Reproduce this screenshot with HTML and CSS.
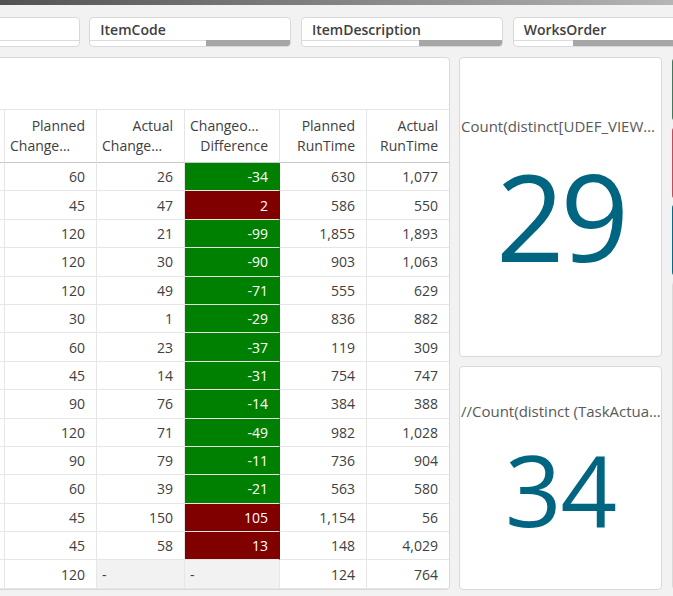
FILE: index.html
```html
<!DOCTYPE html>
<html lang="en">
<head>
<meta charset="utf-8">
<title>Changeover dashboard</title>
<link rel="stylesheet" href="styles.css">
</head>
<body>
<div class="topbar"></div>

<div class="filters">
  <div class="filter">
    <div class="fname"></div>
    <div class="fbar"><span class="poss" style="width:100%"></span></div>
  </div>
  <div class="filter">
    <div class="fname">ItemCode</div>
    <div class="fbar"><span class="poss" style="width:58%"></span><span class="excl"></span></div>
  </div>
  <div class="filter">
    <div class="fname">ItemDescription</div>
    <div class="fbar"><span class="poss" style="width:58.5%"></span><span class="excl"></span></div>
  </div>
  <div class="filter">
    <div class="fname">WorksOrder</div>
    <div class="fbar"><span class="poss" style="width:29.5%"></span><span class="excl"></span></div>
  </div>
</div>

<div class="main">
  <section class="card table-card">
    <table class="grid">
      <colgroup>
        <col class="w1"><col class="w2"><col class="w3"><col class="w4"><col class="w5"><col class="w6">
      </colgroup>
      <thead>
        <tr>
          <th></th>
          <th><span>Planned</span><span class="cut">Change…</span></th>
          <th><span>Actual</span><span class="cut">Change…</span></th>
          <th><span class="cut">Changeo…</span><span>Difference</span></th>
          <th><span>Planned</span><span>RunTime</span></th>
          <th><span>Actual</span><span>RunTime</span></th>
        </tr>
      </thead>
      <tbody>
        <tr><td></td><td>60</td><td>26</td><td class="neg">-34</td><td>630</td><td>1,077</td></tr>
        <tr><td></td><td>45</td><td>47</td><td class="pos">2</td><td>586</td><td>550</td></tr>
        <tr><td></td><td>120</td><td>21</td><td class="neg">-99</td><td>1,855</td><td>1,893</td></tr>
        <tr><td></td><td>120</td><td>30</td><td class="neg">-90</td><td>903</td><td>1,063</td></tr>
        <tr><td></td><td>120</td><td>49</td><td class="neg">-71</td><td>555</td><td>629</td></tr>
        <tr><td></td><td>30</td><td>1</td><td class="neg">-29</td><td>836</td><td>882</td></tr>
        <tr><td></td><td>60</td><td>23</td><td class="neg">-37</td><td>119</td><td>309</td></tr>
        <tr><td></td><td>45</td><td>14</td><td class="neg">-31</td><td>754</td><td>747</td></tr>
        <tr><td></td><td>90</td><td>76</td><td class="neg">-14</td><td>384</td><td>388</td></tr>
        <tr><td></td><td>120</td><td>71</td><td class="neg">-49</td><td>982</td><td>1,028</td></tr>
        <tr><td></td><td>90</td><td>79</td><td class="neg">-11</td><td>736</td><td>904</td></tr>
        <tr><td></td><td>60</td><td>39</td><td class="neg">-21</td><td>563</td><td>580</td></tr>
        <tr><td></td><td>45</td><td>150</td><td class="pos">105</td><td>1,154</td><td>56</td></tr>
        <tr><td></td><td>45</td><td>58</td><td class="pos">13</td><td>148</td><td>4,029</td></tr>
        <tr><td></td><td>120</td><td class="null">-</td><td class="null">-</td><td>124</td><td>764</td></tr>
      </tbody>
    </table>
  </section>

  <div class="kpis">
    <section class="card kpi kpi-a">
      <div class="kpi-title">Count(distinct[UDEF_VIEW…</div>
      <div class="kpi-value">29</div>
    </section>
    <section class="card kpi kpi-b">
      <div class="kpi-title">//Count(distinct (TaskActua…</div>
      <div class="kpi-value">34</div>
    </section>
  </div>

  <div class="side">
    <div class="tile tile-green"></div>
    <div class="tile tile-red"></div>
    <div class="tile tile-teal"></div>
    <div class="card side-card"></div>
  </div>
</div>
</body>
</html>
```

FILE: styles.css
```css
* { box-sizing: border-box; }

html, body {
  margin: 0;
  height: 100%;
  overflow: hidden;
}

body {
  background: #f2f2f2;
  font-family: "Open Sans", "Noto Sans", sans-serif;
  color: #404040;
}

.topbar {
  height: 5px;
  background: linear-gradient(to right, #525252, #b5b5b5);
}

/* filter pane */
.filters {
  display: flex;
  gap: 9.7px;
  margin: 12px 0 0 -122.4px;
}

.filter {
  flex: 0 0 202px;
  height: 30px;
  background: #fff;
  border: 1px solid #d9d9d9;
  border-radius: 4px;
  overflow: hidden;
  display: flex;
  flex-direction: column;
}

.fname {
  height: 22px;
  line-height: 23px;
  padding-left: 10px;
  font-size: 14px;
  font-weight: 600;
  color: #404040;
  white-space: nowrap;
}

.fbar {
  height: 6px;
  display: flex;
}

.poss {
  flex: 0 0 auto;
  border-top: 1px solid #dcdcdc;
}

.excl {
  flex: 1;
  background: #a6a6a6;
}

/* main layout */
.main {
  display: grid;
  grid-template-columns: 550px 203px 203px;
  column-gap: 9px;
  height: 533px;
  margin: 10px 0 0 -100px;
}

.card {
  background: #fff;
  border: 1px solid #d9d9d9;
  border-radius: 4px;
}

.table-card {
  padding-top: 51px;
  overflow: hidden;
}

/* table */
.grid {
  border-collapse: separate;
  border-spacing: 0;
  table-layout: fixed;
  width: 548px;
  font-size: 14px;
  color: #404040;
}

.w1 { width: 104px; }
.w2 { width: 92px; }
.w3 { width: 88px; }
.w4 { width: 95px; }
.w5 { width: 87px; }
.w6 { width: 82px; }

.grid th,
.grid td {
  border-right: 1px solid #e6e6e6;
  border-bottom: 1px solid #e6e6e6;
  padding: 0 11px 0 5px;
  text-align: right;
  white-space: nowrap;
  overflow: hidden;
}

.grid th:last-child,
.grid td:last-child {
  border-right: none;
}

.grid thead tr { height: 54px; }

.grid th {
  border-top: 1px solid #e6e6e6;
  border-bottom: 1px solid #c9c9c9;
  font-weight: 400;
  vertical-align: top;
  padding-top: 6px;
  line-height: 20px;
}

.grid th span { display: block; }
.grid th .cut { text-align: left; }

.grid tbody tr { height: 28.4px; }

.grid td {
  line-height: 19px;
  vertical-align: middle;
}

.grid td.neg {
  background: #008000;
  color: #fff;
  border-right-color: transparent;
}

.grid td.pos {
  background: #800000;
  color: #fff;
  border-right-color: transparent;
}

.grid td.null {
  background: #f2f2f2;
  text-align: left;
}

/* KPI column */
.kpis {
  display: flex;
  flex-direction: column;
  gap: 9px;
}

.kpi {
  text-align: center;
  overflow: hidden;
}

.kpi-a {
  height: 300px;
  padding-top: 58px;
}

.kpi-b {
  flex: 1;
  padding-top: 34px;
}

.kpi-title {
  font-size: 15px;
  line-height: 20px;
  color: #595959;
  text-align: left;
  white-space: nowrap;
  overflow: hidden;
  text-overflow: clip;
  padding: 0 0 0 1px;
}

.kpi-value {
  color: #006580;
  line-height: 1;
}

.kpi-a .kpi-value {
  font-size: 120px;
  margin-top: 20px;
  letter-spacing: -4px;
}

.kpi-b .kpi-value {
  font-size: 99px;
  margin-top: 18px;
  letter-spacing: -1px;
}

/* partially visible right column */
.side {
  display: flex;
  flex-direction: column;
  margin-left: 1px;
  padding-top: 1px;
}

.tile { border-radius: 4px; }

.tile-green {
  height: 63px;
  background: #3f7a5c;
}

.tile-red {
  height: 72px;
  margin-top: 6px;
  background: #c24c5a;
}

.tile-teal {
  height: 72px;
  margin-top: 5px;
  background: #006d8a;
}

.side-card {
  flex: 1;
  margin-top: 5px;
}
```
